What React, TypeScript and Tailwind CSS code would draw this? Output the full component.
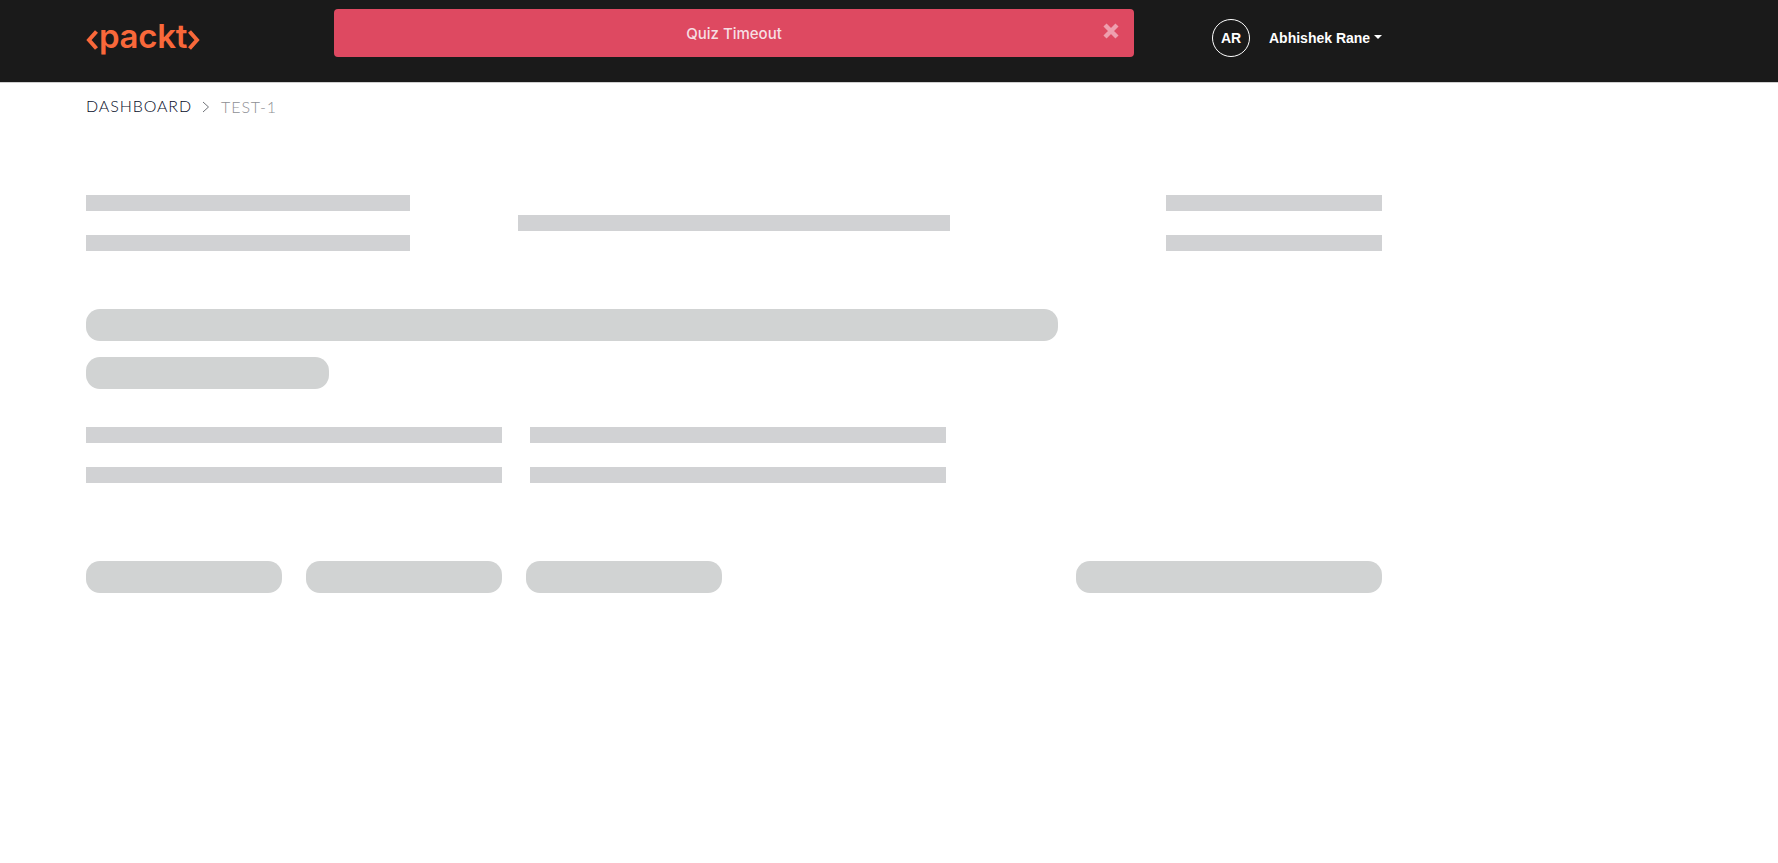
import React from "react";

function Logo() {
  return (
    <div className="flex items-center h-[40px]">
      <svg width="13" height="24" viewBox="0 0 13 24" fill="none" className="mt-[3px] shrink-0">
        <path d="M10.5 3.5 L3 12 L10.5 20.5" stroke="#f9683a" strokeWidth="4" />
      </svg>
      <span
        className="text-[33px] leading-none font-semibold tracking-[-0.3px] text-[#f9683a] -mt-[3px]"
        style={{ fontFamily: "Inter, sans-serif" }}
      >
        packt
      </span>
      <svg width="13" height="24" viewBox="0 0 13 24" fill="none" className="mt-[3px] shrink-0">
        <path d="M2.5 3.5 L10 12 L2.5 20.5" stroke="#f9683a" strokeWidth="4" />
      </svg>
    </div>
  );
}

function Bar({ className }: { className: string }) {
  return <div className={`h-4 bg-[#d1d2d4] ${className}`} />;
}

function Pill({ className }: { className: string }) {
  return <div className={`h-8 rounded-[14px] bg-[#d1d3d3] ${className}`} />;
}

export default function App() {
  return (
    <div className="min-h-[863px] bg-white font-['Lato',sans-serif]">
      <header className="h-[82px] bg-[#1a1a1a] pl-[86px] flex items-start">
        <div className="w-[248px] pt-[18px]">
          <Logo />
        </div>
        <div className="w-[800px] h-[48px] mt-[9px] pt-[2px] rounded-[4px] bg-[#de4961] flex items-center justify-center relative text-[#f6dfe3] text-[15px] font-medium font-['Inter',sans-serif]">
          Quiz Timeout
          <svg className="absolute right-[14px] top-[13px]" width="18" height="18" viewBox="0 0 18 18" fill="none">
            <path d="M3 3 L15 15 M15 3 L3 15" stroke="#ee9fae" strokeWidth="4.4" />
          </svg>
        </div>
        <div className="ml-[78px] mt-[19px] w-[38px] h-[38px] rounded-full border border-white flex items-center justify-center text-white text-[14px] font-bold font-['Liberation_Sans',sans-serif]">
          AR
        </div>
        <div className="ml-[19px] mt-[28px] flex items-center text-white text-[14px] leading-[20px] font-bold font-['Liberation_Sans',sans-serif]">
          Abhishek Rane
          <span className="ml-[4px] mb-[2px] w-0 h-0 border-x-[4px] border-x-transparent border-t-[4px] border-t-white" />
        </div>
      </header>

      <nav className="h-[113px] pl-[86px] pt-[13px] flex items-start border-t border-[#cfcfcf] text-[16px] leading-[20px] tracking-[0.9px] font-light">
        <span className="text-[#060c28]">DASHBOARD</span>
        <svg className="ml-[10px] mt-[4px]" width="8" height="14" viewBox="0 0 8 14" fill="none">
          <path d="M1 2 L6.5 7 L1 12" stroke="#6f7278" strokeWidth="1" />
        </svg>
        <span className="ml-[11px] text-[#8e8f94] mt-[1px]">TEST-1</span>
      </nav>

      <main className="w-[1296px] ml-[86px]">
        <section className="h-[56px] flex items-center">
          <div className="w-[324px] flex flex-col gap-6">
            <Bar className="w-full" />
            <Bar className="w-full" />
          </div>
          <Bar className="w-[432px] ml-[108px]" />
          <div className="w-[216px] ml-auto flex flex-col gap-6">
            <Bar className="w-full" />
            <Bar className="w-full" />
          </div>
        </section>

        <section className="mt-[58px] flex flex-col gap-4">
          <Pill className="w-[972px]" />
          <Pill className="w-[243px]" />
        </section>

        <section className="mt-[38px] flex gap-7">
          <div className="w-[416px] flex flex-col gap-6">
            <Bar className="w-full" />
            <Bar className="w-full" />
          </div>
          <div className="w-[416px] flex flex-col gap-6">
            <Bar className="w-full" />
            <Bar className="w-full" />
          </div>
        </section>

        <section className="mt-[78px] flex gap-6">
          <Pill className="w-[196px]" />
          <Pill className="w-[196px]" />
          <Pill className="w-[196px]" />
          <Pill className="w-[306px] ml-auto" />
        </section>
      </main>
    </div>
  );
}
